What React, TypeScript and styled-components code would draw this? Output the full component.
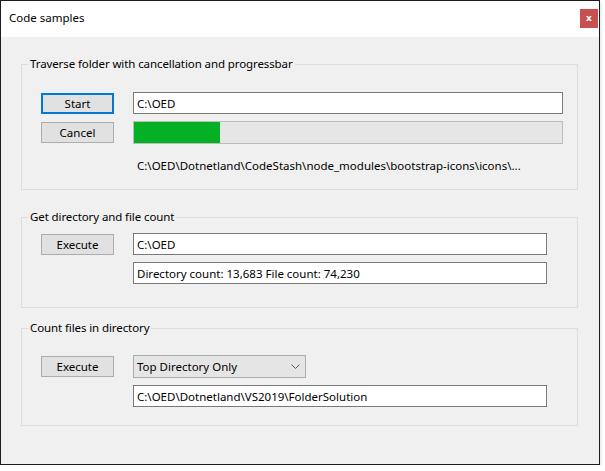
import React from 'react';
import styled, { createGlobalStyle } from 'styled-components';

const GlobalStyle = createGlobalStyle`
  body {
    margin: 0;
    background: #ffffff;
    font-family: "Noto Sans", "Open Sans", sans-serif;
    font-size: 11px;
    color: #000;
  }
`;

export default function App() {
  return (
    <>
      <GlobalStyle />
      <Window>
        <TitleBar>
          <TitleText>Code samples</TitleText>
          <CloseButton>x</CloseButton>
        </TitleBar>
        <Body>
          <Group $gap={0}>
            <Legend>Traverse folder with cancellation and progressbar</Legend>
            <GroupContent $top={20} $bottom={15}>
              <Row>
                <Button $focused>Start</Button>
                <TextBox $width={430}>C:\OED</TextBox>
              </Row>
              <Row>
                <Button>Cancel</Button>
                <Progress>
                  <ProgressFill style={{ width: '20%' }} />
                </Progress>
              </Row>
              <PathLabel>C:\OED\Dotnetland\CodeStash\node_modules\bootstrap-icons\icons\...</PathLabel>
            </GroupContent>
          </Group>

          <Group $gap={19}>
            <Legend>Get directory and file count</Legend>
            <GroupContent $top={8} $bottom={23}>
              <Row>
                <Button>Execute</Button>
                <TextBox $width={414}>C:\OED</TextBox>
              </Row>
              <Row>
                <Spacer />
                <TextBox $width={414}>Directory count: 13,683 File count: 74,230</TextBox>
              </Row>
            </GroupContent>
          </Group>

          <Group $gap={12}>
            <Legend>Count files in directory</Legend>
            <GroupContent $top={19} $bottom={18}>
              <Row>
                <Button>Execute</Button>
                <Combo>
                  <span>Top Directory Only</span>
                  <svg width="9" height="5" viewBox="0 0 9 5">
                    <path d="M0.5 0.5 L4.5 4.5 L8.5 0.5" fill="none" stroke="#5a5a5a" strokeWidth="1" />
                  </svg>
                </Combo>
              </Row>
              <Row>
                <Spacer />
                <TextBox $width={414}>C:\OED\Dotnetland\VS2019\FolderSolution</TextBox>
              </Row>
            </GroupContent>
          </Group>
        </Body>
      </Window>
    </>
  );
}

const Window = styled.div`
  width: 600px;
  height: 465px;
  box-sizing: border-box;
  border: 1px solid #1c1c1c;
  display: flex;
  flex-direction: column;
  box-shadow: 1px 2px 3px rgba(0, 0, 0, 0.12);
`;

const TitleBar = styled.div`
  height: 36px;
  flex: none;
  background: #ffffff;
  display: flex;
  align-items: flex-start;
  justify-content: space-between;
  padding: 0 1px 0 8px;
`;

const TitleText = styled.div`
  font-size: 11.5px;
  line-height: 16px;
  margin-top: 9px;
`;

const CloseButton = styled.div`
  width: 18px;
  height: 19px;
  margin-top: 8px;
  background: #c75050;
  color: #fff;
  font-family: "DejaVu Sans", sans-serif;
  font-weight: bold;
  font-size: 9px;
  display: flex;
  align-items: center;
  justify-content: center;
  padding-bottom: 2px;
  box-sizing: border-box;
`;

const Body = styled.div`
  flex: 1;
  background: #f0f0f0;
  padding: 19px 21px 0 20px;
`;

const Group = styled.fieldset<{ $gap: number }>`
  margin: ${p => p.$gap}px 0 0 0;
  padding: 0;
  border: 1px solid #dcdcdc;
  min-width: 0;
`;

const Legend = styled.legend`
  margin-left: 6px;
  padding: 0 2px;
  font-size: 11.5px;
  line-height: 16px;
  letter-spacing: -0.1px;
`;

const GroupContent = styled.div<{ $top: number; $bottom: number }>`
  display: flex;
  flex-direction: column;
  gap: 7px;
  padding: ${p => p.$top}px 0 ${p => p.$bottom}px 19px;
`;

const Row = styled.div`
  display: flex;
  align-items: flex-start;
  gap: 19px;
`;

const Button = styled.div<{ $focused?: boolean }>`
  width: 73px;
  height: 21px;
  box-sizing: border-box;
  margin-top: 1px;
  background: #e1e1e1;
  border: ${p => (p.$focused ? '2px solid #0078d7' : '1px solid #adadad')};
  display: flex;
  align-items: center;
  justify-content: center;
  font-size: 11.5px;
`;

const Spacer = styled.div`
  width: 73px;
  flex: none;
`;

const TextBox = styled.div<{ $width: number }>`
  width: ${p => p.$width}px;
  height: 22px;
  box-sizing: border-box;
  background: #ffffff;
  border: 1px solid #7a7a7a;
  padding-left: 3px;
  display: flex;
  align-items: center;
  font-size: 11.5px;
  white-space: nowrap;
`;

const Progress = styled.div`
  width: 430px;
  height: 23px;
  box-sizing: border-box;
  background: #e6e6e6;
  border: 1px solid #bcbcbc;
`;

const ProgressFill = styled.div`
  height: 100%;
  background: #06b025;
`;

const PathLabel = styled.div`
  margin: 7px 0 0 96px;
  font-size: 11.5px;
  line-height: 16px;
  white-space: nowrap;
`;

const Combo = styled.div`
  width: 173px;
  height: 23px;
  box-sizing: border-box;
  background: #e5e5e5;
  border: 1px solid #acacac;
  display: flex;
  align-items: center;
  justify-content: space-between;
  padding: 0 5px 0 3px;
  font-size: 11.5px;
`;
